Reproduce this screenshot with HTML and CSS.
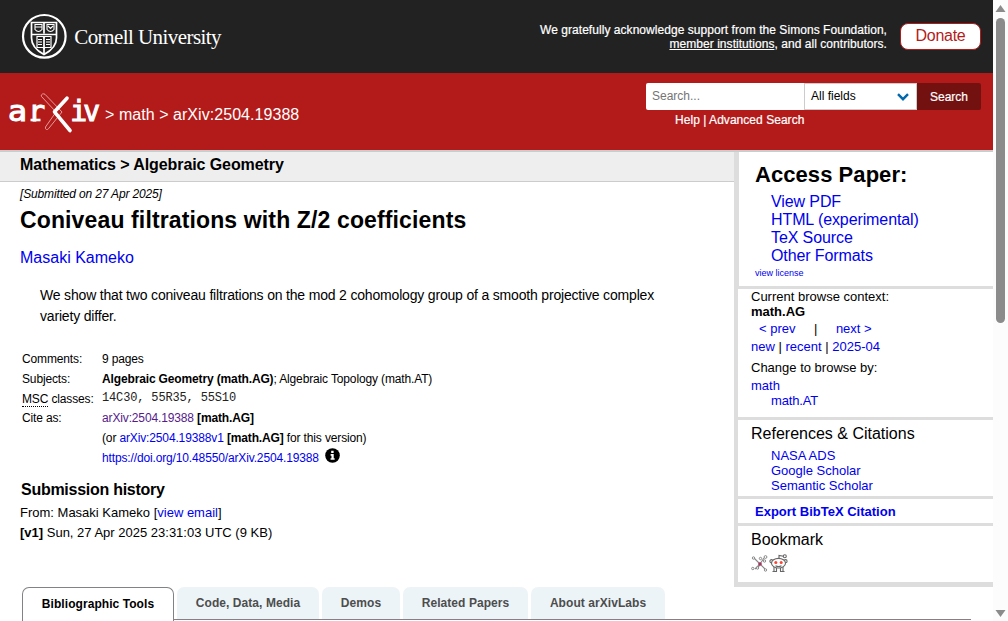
FILE: index.html
```html
<!DOCTYPE html>
<html lang="en">
<head>
<meta charset="utf-8">
<title>[2504.19388] Coniveau filtrations with Z/2 coefficients</title>
<link rel="stylesheet" href="styles.css">
</head>
<body>
<div class="page">
  <header>
    <div class="cornell-bar">
      <svg class="cornell-logo" width="212" height="54" viewBox="0 0 212 54" fill="none" stroke="#fff">
        <circle cx="23.300" cy="24.300" r="21.300" stroke-width="2.200"/>
        <path d="M10.500 10.500h25V26c0 8-5 12.500-12.500 16.500C15.500 38.500 10.500 34 10.500 26z" stroke-width="1.700"/>
        <path d="M10.500 22.500h25M23 10.500v11M23 24v18" stroke-width="1.700"/>
        <path d="M14 12.500h7v5q-3.500 4-7 0zM26 12.500h7v5q-3.500 4-7 0zM14 15h7M27 14l2.500 2.500 2.500-2.500" stroke-width="1.100"/>
        <path d="M16 24.500h6l1 1 1-1h6v11h-6l-1 1-1-1h-6zM17 27.500h4M17 30h4M17 32.500h4M25 27.500h4M25 30h4M25 32.500h4" stroke-width="1.200"/>
        <text class="cornell-name" x="53.200" y="32">Cornell University</text>
      </svg>
      <div class="support">
        <p>We gratefully acknowledge support from the Simons Foundation,<br><a href="#">member institutions</a>, and all contributors.</p>
        <a class="donate" href="#">Donate</a>
      </div>
    </div>
    <div class="brand-bar">
      <div class="crumbs">
        <svg class="arxiv-logo" width="93" height="42" viewBox="0 0 93 42">
          <g class="arxiv-letters">
            <text x="-1" y="29" textLength="19" lengthAdjust="spacingAndGlyphs">a</text>
            <text x="19.300" y="29">r</text>
            <text x="61.300 74.300" y="29">iv</text>
          </g>
          <path d="M21.500 28h10" stroke="#fff" stroke-width="2.600"/>
          <path d="M33.500 2q-2 1-1 2.500L47 20 36.500 35q-.500 2 1 2.500 1 .300 2-.800L53 20 36 2.300q-1.200-.800-2.500-.300z" fill="none" stroke="#e9a9a9" stroke-width=".900"/>
          <path d="M58 6.200L45.500 19.800 61 38.500" fill="none" stroke="#fff" stroke-width="3.600" stroke-linecap="round" stroke-linejoin="round"/>
        </svg>
        <span class="crumb-text">&gt; math &gt; arXiv:2504.19388</span>
      </div>
      <div class="search">
        <div class="search-row">
          <span class="search-input">Search...</span>
          <span class="search-select">All fields
            <svg width="12" height="8" viewBox="0 0 12 8"><path d="M1 1.200l5 5 5-5" fill="none" stroke="#0068ac" stroke-width="2.400"/></svg>
          </span>
          <span class="search-button">Search</span>
        </div>
        <div class="search-links">Help | Advanced Search</div>
      </div>
    </div>
  </header>
  <div class="columns">
    <main>
      <div class="subject">Mathematics &gt; Algebraic Geometry</div>
      <div class="dateline">[Submitted on 27 Apr 2025]</div>
      <h1>Coniveau filtrations with Z/2 coefficients</h1>
      <div class="authors"><a href="#">Masaki Kameko</a></div>
      <p class="abstract">We show that two coniveau filtrations on the mod 2 cohomology group of a smooth projective complex<br>variety differ.</p>
      <div class="meta">
        <span>Comments:</span><span>9 pages</span>
        <span>Subjects:</span><span><b>Algebraic Geometry (math.AG)</b>; Algebraic Topology (math.AT)</span>
        <span class="msc"><abbr>MSC</abbr> classes:</span><span class="mono">14C30, 55R35, 55S10</span>
        <span>Cite as:</span><span><a class="visited" href="#">arXiv:2504.19388</a> <b>[math.AG]</b></span>
        <span></span><span>(or <a href="#">arXiv:2504.19388v1</a> <b>[math.AG]</b> for this version)</span>
        <span></span><span class="doi"><a href="#">https://doi.org/10.48550/arXiv.2504.19388</a>
          <svg width="15" height="15" viewBox="0 0 16 16"><circle cx="8" cy="8" r="7.800"/><path d="M6.600 2.800h2.600v2.400H6.600zM6 6.500h3.300v4.300h1v1.700H5.900v-1.700h1V8.200H6z" fill="#fff"/></svg>
        </span>
      </div>
      <h2>Submission history</h2>
      <div class="history">From: Masaki Kameko [<a href="#">view email</a>]<br><b>[v1]</b> Sun, 27 Apr 2025 23:31:03 UTC (9 KB)</div>
    </main>
    <aside>
      <section class="access">
        <h2>Access Paper:</h2>
        <ul><li><a href="#">View PDF</a></li><li><a href="#">HTML (experimental)</a></li><li><a href="#">TeX Source</a></li><li><a href="#">Other Formats</a></li></ul>
        <a class="license" href="#">view license</a>
      </section>
      <section class="browse">
        <div class="context">Current browse context:<br><b>math.AG</b></div>
        <div class="prevnext"><a href="#">&lt; prev</a><span>|</span><a href="#">next &gt;</a></div>
        <div class="line"><a href="#">new</a> | <a href="#">recent</a> | <a href="#">2025-04</a></div>
        <div class="change">Change to browse by:</div>
        <div class="switch"><a href="#">math</a><a class="sub" href="#">math.AT</a></div>
      </section>
      <section class="refs">
        <h3>References &amp; Citations</h3>
        <ul><li><a href="#">NASA ADS</a></li><li><a href="#">Google Scholar</a></li><li><a href="#">Semantic Scholar</a></li></ul>
      </section>
      <section class="export"><a href="#">Export BibTeX Citation</a></section>
      <section class="bookmark">
        <h3>Bookmark</h3>
        <div class="icons">
          <svg width="17" height="18" viewBox="0 0 17 18" fill="none" stroke="#888">
            <path d="M3 4l6 6 5 5M9 10l4-6M9 10l-5 5M9 10l-2 4" stroke-width="1.100"/>
            <g fill="#fff"><circle cx="2.500" cy="4" r="1.200"/><circle cx="14.500" cy="3" r="1.400"/><circle cx="9.500" cy="4.500" r="1.200"/><circle cx="13.500" cy="7" r="1.200"/><circle cx="1.800" cy="14.500" r="1.200"/><circle cx="6.500" cy="14" r="1.200"/><circle cx="14.500" cy="16" r="1.200"/></g>
            <circle cx="9" cy="10" r="1.800" fill="#a8325e" stroke="none"/>
          </svg>
          <svg width="19" height="19" viewBox="0 0 19 19" fill="#fff" stroke="#666" stroke-width="1.100">
            <path d="M10 6V1.500l4.500.800" fill="none"/><circle cx="15.800" cy="2.200" r="1.500"/>
            <circle cx="2.500" cy="7.200" r="1.600"/><circle cx="16.500" cy="7.200" r="1.600"/>
            <path d="M5 12v5.500H3.500M5 17.500h2.500V14M14 12v5.500h1.500M14 17.500h-2.500V14"/><ellipse cx="9.500" cy="9.200" rx="7" ry="4.800"/>
            <path d="M6.500 11.700q3 1.600 6 0" fill="none"/>
            <g fill="#f43" stroke="none"><circle cx="6.800" cy="8.500" r="1.500"/><circle cx="12.200" cy="8.500" r="1.500"/></g>
          </svg>
        </div>
      </section>
    </aside>
  </div>
  <nav class="tabs">
    <span class="tab active">Bibliographic Tools</span>
    <span class="tab t2">Code, Data, Media</span>
    <span class="tab t3">Demos</span>
    <span class="tab t4">Related Papers</span>
    <span class="tab t5">About arXivLabs</span>
  </nav>
</div>
<div class="scrollbar">
  <svg width="11" height="7" viewBox="0 0 11 7"><path d="M5.500 0L10.500 7H.5z"/></svg>
  <div class="thumb"></div>
  <svg class="down" width="11" height="7" viewBox="0 0 11 7"><path d="M.5 0h10L5.500 7z"/></svg>
</div>
</body>
</html>
```
FILE: styles.css
```css
* { box-sizing: border-box; }
body {
  margin: 0;
  display: flex;
  width: 1008px;
  height: 621px;
  overflow: hidden;
  background: #fff;
  color: #000;
  font-family: "Liberation Sans", Arial, sans-serif;
}
a { color: #00e; text-decoration: none; }
h1, h2, h3, p, ul { margin: 0; padding: 0; list-style: none; }
.page { width: 993px; flex: none; height: 621px; overflow: hidden; white-space: nowrap; }

.cornell-bar { display: flex; justify-content: space-between; height: 73px; padding: 12px 12px 0 21px; background: #222; }
.cornell-logo, .arxiv-logo { overflow: visible; }
.cornell-name { font: 21px "Liberation Serif", serif; letter-spacing: -.560px; fill: #fff; stroke: none; }
.support { display: flex; gap: 13px; color: #fff; font-size: 12px; letter-spacing: .050px; line-height: 14px; text-align: right; padding-top: 11px; }
.support p { -webkit-text-stroke: .2px #fff; }
.support p a { color: #fff; text-decoration: underline; }
.donate { width: 81px; height: 27px; border: 1px solid #b31b1b; border-radius: 8px; background: #fff; color: #b31b1b; font-size: 16px; letter-spacing: -.300px; line-height: 24px; text-align: center; }

.brand-bar { display: flex; justify-content: space-between; height: 79px; padding: 0 12px 0 9px; background: #b31b1b; border-bottom: 2px solid #ccc; color: #fff; }
.crumbs { display: flex; padding-top: 19px; gap: 3px; }
.arxiv-letters { font: 28px "DejaVu Sans Mono", monospace; fill: #fff; stroke: #fff; stroke-width: 1.1px; }
.crumb-text { padding-top: 1px; font-size: 16px; letter-spacing: .050px; line-height: 44px; }
.search { width: 335px; padding-top: 10px; font-size: 12px; }
.search-row { display: flex; height: 27px; line-height: 27px; }
.search-input { width: 158px; padding-left: 6px; background: #fff; color: #757575; border-radius: 2px 0 0 2px; }
.search-select { display: flex; align-items: center; justify-content: space-between; width: 113px; padding: 0 7px 0 6px; background: #fff; border: 1px solid #ccc; color: #000; }
.search-button { width: 64px; background: #731111; border-radius: 0 2px 2px 0; text-align: center; line-height: 29px; -webkit-text-stroke: .2px #fff; }
.search-links { padding-left: 29px; letter-spacing: .040px; line-height: 20px; -webkit-text-stroke: .2px #fff; }

.columns { display: flex; height: 435px; }
main { width: 734px; }
.subject { height: 30px; padding-left: 20px; background: #eee; border-bottom: 1px solid #ccc; font-size: 16px; font-weight: bold; letter-spacing: -.090px; line-height: 25px; }
.dateline { padding-left: 20px; font-size: 12px; font-style: italic; letter-spacing: -.150px; line-height: 24px; }
h1 { padding-left: 20px; font-size: 23px; letter-spacing: .130px; line-height: 29px; }
.authors { margin-top: 11px; padding-left: 20px; font-size: 16px; line-height: 23px; }
.abstract { margin: 16px 0 0 40px; font-size: 14px; letter-spacing: -.180px; line-height: 21px; }
.meta { display: grid; grid-template-columns: 80px auto; grid-template-rows: 20px 20px 19px 20px 20px 20px; margin: 22px 0 0 22px; font-size: 12px; letter-spacing: -.140px; line-height: 20px; }
.msc abbr { border-bottom: 1px dotted #000; }
.mono { font-family: "Liberation Mono", monospace; font-size: 12px; letter-spacing: -.150px; line-height: 18px; color: #222; }
.visited { color: #551a8b; }
.doi { display: flex; align-items: center; gap: 6px; }
.doi svg { margin-bottom: 5px; }
main h2 { margin-top: 11px; padding-left: 21px; font-size: 16px; letter-spacing: -.270px; line-height: 21px; }
.history { margin-top: 3px; padding-left: 20px; font-size: 13px; line-height: 20px; }

aside { width: 259px; border-left: 4px solid #ddd; border-bottom: 5px solid #ddd; font-size: 13px; }
aside section { border-bottom: 3px solid #ddd; padding-left: 13px; }
aside h3 { font-size: 16px; font-weight: normal; }
aside .access { height: 137px; padding: 9px 0 0 16px; border-left: 1px solid #ddd; }
.access h2 { font-size: 22px; letter-spacing: .060px; line-height: 27px; }
.access ul { padding: 5px 0 0 16px; font-size: 16px; letter-spacing: -.100px; line-height: 18px; }
.license { display: block; font-size: 9px; line-height: 16px; }
.browse { height: 131px; }
.context { line-height: 15px; }
.prevnext { display: flex; gap: 18.500px; padding: 2px 0 0 8px; margin-bottom: 1px; line-height: 15px; }
.line { line-height: 19px; }
.change { margin-top: 2px; line-height: 19px; }
.switch { padding-top: 1px; line-height: 15px; }
.switch a { display: block; }
.switch .sub { padding-left: 20px; letter-spacing: -.150px; }
.refs { height: 79px; }
.refs h3 { line-height: 27px; }
.refs ul { padding: 1px 0 0 20px; line-height: 15px; }
.export { height: 27px; font-weight: bold; line-height: 26px; }
aside .export { padding-left: 17px; }
aside .bookmark { border-bottom: 0; }
.bookmark h3 { line-height: 28px; }
.icons { display: flex; gap: 1px; }

.tabs { display: flex; align-items: flex-start; gap: 3px; height: 34px; margin: 0 22px; font-size: 12px; font-weight: bold; letter-spacing: .060px; text-align: center; background: linear-gradient(#808285, #808285) 152px 32px / 797px 1px no-repeat; }
.tab { height: 32px; border-radius: 7px 7px 0 0; background: #ecf4f8; color: #4d4d4d; line-height: 32px; }
.active { width: 152px; height: 36px; border: 1px solid #808285; border-bottom: 0; background: #fff; color: #000; }
.t2 { width: 142px; }
.t3 { width: 78px; }
.t4 { width: 125px; }
.t5 { width: 134px; }

.scrollbar { display: flex; flex-direction: column; align-items: center; width: 15px; background: #fcfcfc; fill: #8b8b8b; padding: 5px 0 4px; }
.thumb { width: 9px; height: 305px; margin-top: 6px; border-radius: 5px; background: #8b8b8b; }
.down { margin-top: auto; }
```
